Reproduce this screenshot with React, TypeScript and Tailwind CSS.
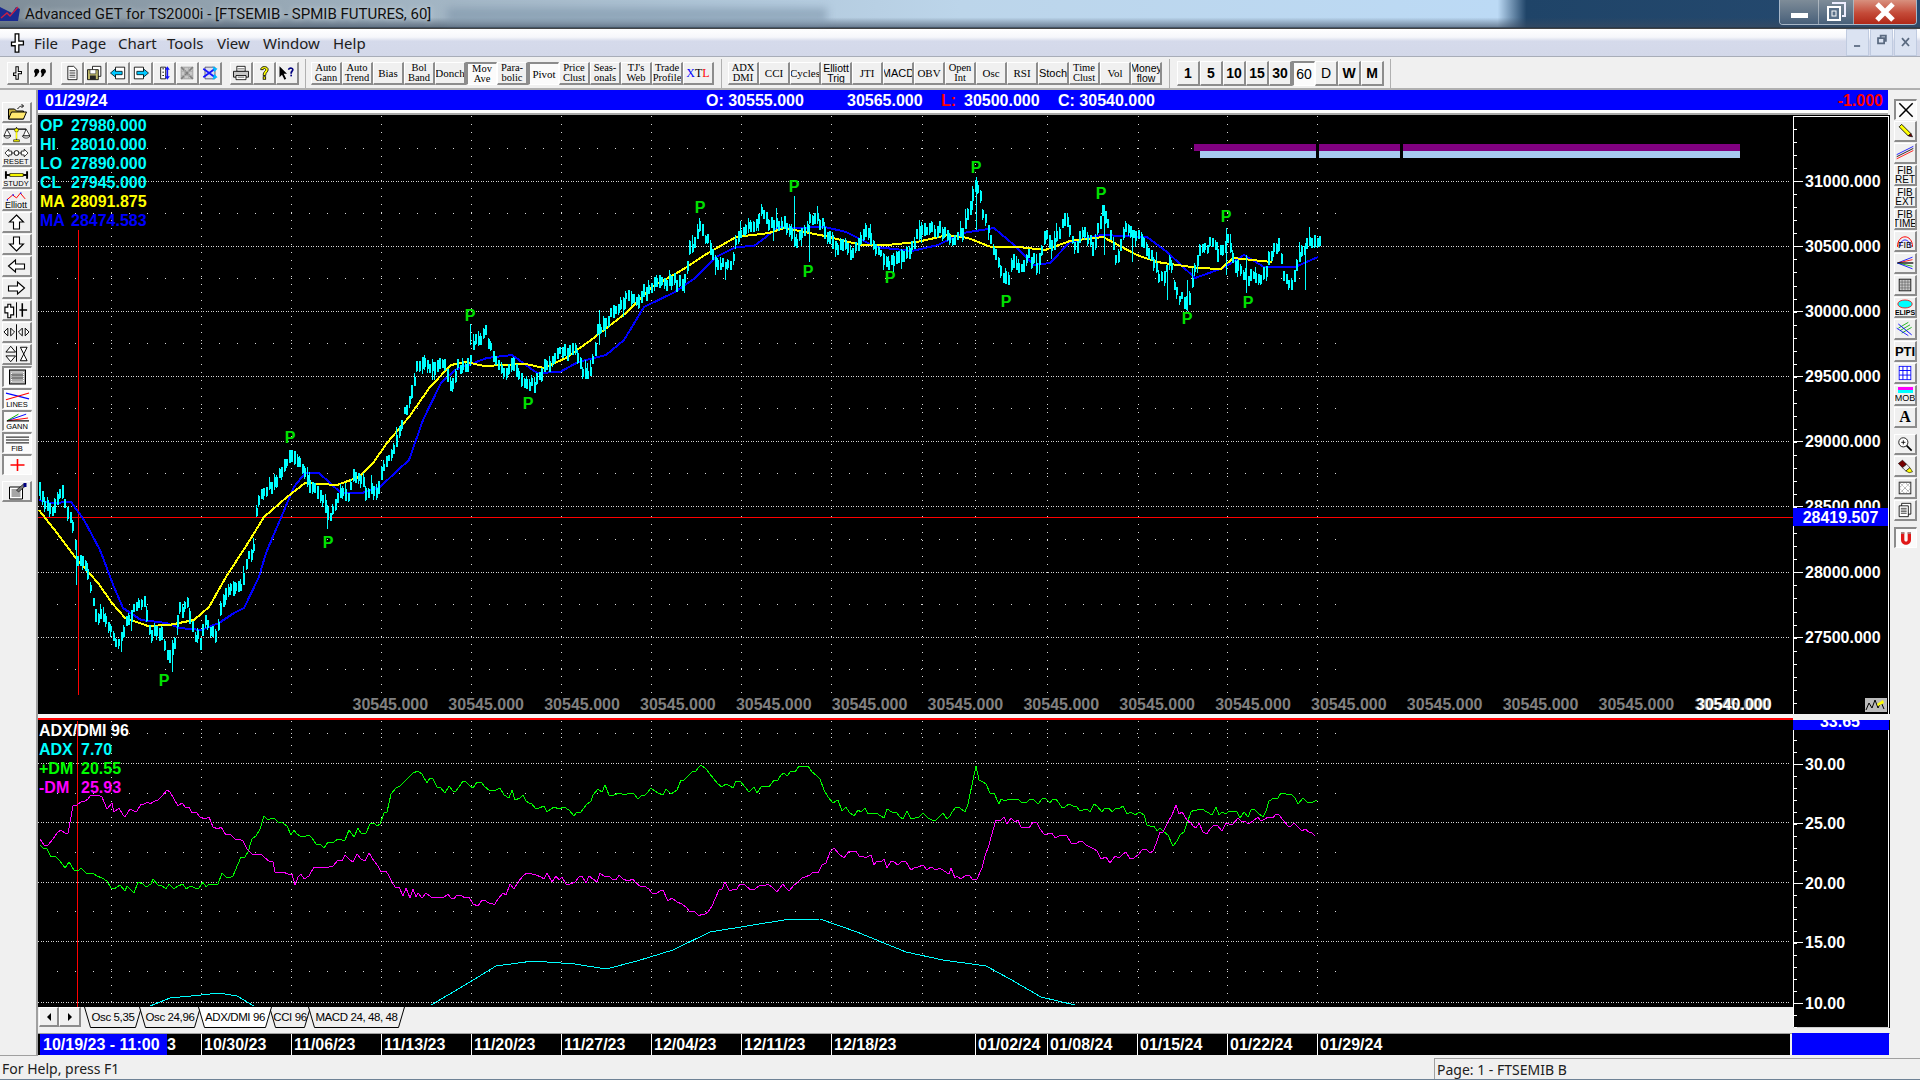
import React from "react";

type P = [number, number];
const ARIAL = "font-['Liberation_Sans',Arial,sans-serif]";
const raised = "flex items-center justify-center overflow-hidden bg-[#f0f0f0] border-t border-l border-t-white border-l-white border-r-2 border-b-2 border-r-[#8c8c8c] border-b-[#8c8c8c]";
const sunken = "flex items-center justify-center overflow-hidden bg-[#fbfbfb] border-t-2 border-l-2 border-t-[#8c8c8c] border-l-[#8c8c8c] border-r border-b border-r-white border-b-white";

const rng = (seed: number) => {
  let s = seed;
  return () => {
    s = (s * 16807) % 2147483647;
    return s / 2147483647;
  };
};
const interp = (pts: P[], x: number) => {
  for (let i = 1; i < pts.length; i++) {
    if (x <= pts[i][0]) {
      const [a, b] = pts[i - 1];
      const [c, d] = pts[i];
      return b + ((d - b) * (x - a)) / Math.max(c - a, 0.001);
    }
  }
  return pts[pts.length - 1][1];
};
const poly = (pts: P[]) => pts.map((p) => p.join(",")).join(" ");

const price: P[] = [[39,493],[44,500],[51,513],[60,490],[66,507],[73,530],[76,563],[82,563],[89,577],[94,613],[105,620],[116,643],[125,627],[134,607],[144,603],[150,633],[162,633],[167,657],[175,640],[178,613],[187,607],[194,633],[200,643],[205,620],[216,640],[219,607],[228,587],[241,587],[248,557],[253,553],[256,513],[259,493],[269,488],[276,480],[284,463],[292,457],[303,467],[307,480],[319,493],[330,520],[337,500],[342,487],[346,500],[351,480],[360,477],[367,493],[378,490],[382,467],[394,450],[401,422],[410,397],[417,363],[430,368],[444,363],[451,387],[457,367],[467,367],[473,343],[485,333],[491,352],[505,373],[512,363],[521,383],[534,387],[541,373],[559,353],[575,350],[581,373],[591,370],[598,330],[614,313],[626,298],[634,303],[649,287],[667,283],[685,282],[688,253],[700,228],[711,250],[718,263],[731,263],[739,230],[751,230],[761,213],[769,225],[784,225],[794,240],[805,230],[815,213],[825,233],[835,243],[851,253],[866,233],[874,250],[892,263],[907,253],[922,227],[938,230],[953,243],[963,230],[976,183],[983,213],[994,253],[1006,282],[1012,260],[1022,273],[1027,253],[1037,267],[1045,230],[1052,250],[1065,217],[1075,247],[1085,230],[1093,250],[1102,210],[1111,237],[1116,263],[1124,230],[1137,237],[1152,257],[1159,280],[1170,263],[1175,290],[1187,307],[1193,273],[1200,250],[1210,243],[1218,253],[1227,240],[1234,263],[1246,277],[1261,280],[1272,253],[1279,247],[1284,277],[1291,285],[1297,263],[1307,243],[1320,240]];
const yellow: P[] = [[39,510],[57,533],[75,557],[98,583],[112,603],[125,618],[148,626],[169,625],[194,620],[209,607],[226,577],[248,543],[264,517],[287,497],[305,483],[337,485],[359,477],[373,463],[387,443],[409,417],[430,387],[451,365],[466,362],[484,366],[526,364],[544,368],[566,358],[591,340],[626,313],[652,287],[682,270],[708,253],[736,237],[769,233],[784,228],[825,236],[861,245],[887,245],[917,242],[948,235],[968,238],[991,247],[1019,247],[1045,250],[1070,241],[1103,237],[1137,255],[1157,262],[1198,268],[1221,269],[1233,258],[1272,262]];
const blue: P[] = [[39,500],[51,503],[71,502],[84,520],[100,550],[114,587],[123,608],[141,620],[166,623],[180,628],[201,630],[219,623],[234,613],[244,608],[259,577],[266,553],[280,520],[294,487],[305,473],[319,473],[341,493],[362,493],[380,487],[398,470],[409,460],[423,420],[441,383],[455,370],[487,358],[512,355],[537,373],[560,372],[578,362],[606,355],[624,340],[644,307],[675,292],[695,278],[716,257],[736,247],[754,246],[779,227],[795,228],[825,227],[846,232],[876,247],[912,251],[938,245],[963,233],[994,228],[1014,245],[1034,265],[1050,263],[1070,242],[1101,235],[1147,237],[1167,252],[1195,278],[1223,268],[1244,255],[1264,267],[1295,267],[1318,257]];
const spikes: [number, number, number][] = [[470,324,345],[809,225,262],[976,177,230],[794,196,240],[1187,280,311],[1132,230,262],[1167,270,300],[1104,205,255],[599,310,345],[1305,243,290],[1226,228,275],[1246,255,293],[76,546,585],[172,640,672],[40,483,500]];
const pMarks: P[] = [[164,680],[290,437],[328,542],[470,315],[528,403],[700,207],[794,186],[808,271],[890,277],[976,167],[1006,301],[1101,193],[1187,318],[1226,216],[1248,302]];

const candles = () => {
  const r = rng(4242);
  let wick = "";
  let body = "";
  for (let x = 39; x <= 1320; x += 2.55) {
    const m = interp(price, x) + (r() - 0.5) * 8;
    const h = r();
    const up = 2 + r() * (h > 0.82 ? 14 : 6);
    const dn = 2 + r() * (h < 0.14 ? 14 : 6);
    const xx = Math.round(x) + 0.5;
    wick += `M${xx} ${(m - up).toFixed(0)}V${(m + dn).toFixed(0)}`;
    body += `M${xx} ${(m - 3 - r() * 4).toFixed(0)}V${(m + 3 + r() * 4).toFixed(0)}`;
  }
  for (const [x, a, b] of spikes) wick += `M${x + 0.5} ${a}V${b}`;
  return { wick, body };
};

const plusDm: P[] = [[33,695],[60,710],[80,720],[100,728],[130,722],[160,725],[190,715],[205,690],[215,670],[240,680],[265,690],[290,680],[310,675],[320,650],[340,632],[360,645],[390,640],[420,650],[440,660],[470,665],[490,645],[520,650],[550,645],[572,625],[590,640],[620,645],[650,630],[665,630],[680,655],[700,665],[730,665],[760,670],[790,660],[797,630],[815,655],[845,655],[880,660],[905,660],[930,665],[960,690],[975,660],[1000,665],[1030,665],[1045,650],[1065,655],[1077,652]];
const minusDm: P[] = [[33,690],[55,680],[62,655],[78,652],[100,665],[120,660],[135,647],[160,665],[185,680],[205,695],[240,720],[270,705],[300,700],[330,730],[370,735],[400,740],[430,715],[470,720],[510,715],[550,735],[575,750],[590,725],[620,725],[645,725],[665,715],[680,695],[720,705],[760,710],[800,718],[812,670],[845,675],[880,690],[905,705],[940,695],[960,660],[985,680],[1020,670],[1045,665],[1060,680],[1077,680]];
const adx: P[] = [[150,1007],[170,999],[201,996],[219,994],[237,997],[254,1007]];
const adx2: P[] = [[431,1006],[465,986],[496,967],[533,962],[575,965],[606,970],[637,962],[673,951],[710,933],[747,927],[784,921],[820,920],[857,933],[906,953],[943,961],[986,967],[1010,980],[1041,998],[1075,1006]];
const wiggle = (src: P[], seed: number, amp: number): P[] => {
  const r = rng(seed);
  const scaled: P[] = src.map(([x, y]) => [x * 1.2245, y * 1.2245]);
  const out: P[] = [];
  for (let x = scaled[0][0]; x <= scaled[scaled.length - 1][0]; x += 2.6 + r() * 2.5) {
    out.push([Math.round(x), Math.round(interp(scaled, x) + (r() - 0.5) * amp)]);
  }
  return out;
};

const vGrid = [111, 201, 291, 381, 471, 561, 651, 741, 831, 922, 975, 1047, 1138, 1227, 1317];
const sparseX: number[] = [];
for (let x = 39; x <= 1317; x += 18) sparseX.push(x + 18);

const topRows = [181, 246, 311, 376, 441, 506, 572, 637];
const topLabels = ["31000.000", "30500.000", "30000.000", "29500.000", "29000.000", "28500.000", "28000.000", "27500.000"];
const botRows = [764, 823, 883, 942, 1003];
const botLabels = ["30.00", "25.00", "20.00", "15.00", "10.00"];

const Svg = ({ children, vb = "0 0 24 18" }: { children: React.ReactNode; vb?: string }) => (
  <svg viewBox={vb} className="w-full h-full block">{children}</svg>
);

const Hand = () => (
  <path d="M10 1h3v6h4v3h-4v7h-3v-5H7V9h3z" fill="#fff" stroke="#000" strokeWidth="1.3" />
);
const Arrow = ({ d }: { d: string }) => <Svg><path d={d} fill="#fff" stroke="#000" strokeWidth="1.1" /></Svg>;
const Lbl = ({ children, cn = "text-[7.5px] leading-[7px]" }: { children: React.ReactNode; cn?: string }) => (
  <span className={`${ARIAL} text-black text-center block whitespace-nowrap ${cn}`}>{children}</span>
);
const Stack = ({ h, vb, label, children, cn }: { h?: string; vb: string; label: string; children: React.ReactNode; cn?: string }) => (
  <div className="flex flex-col items-center w-full">
    <div className={`w-[25px] ${h ?? "h-[10px]"}`}><Svg vb={vb}>{children}</Svg></div>
    <Lbl cn={cn}>{label}</Lbl>
  </div>
);
const Two = ({ a, b }: { a: string; b: string }) => (
  <div>
    <Lbl cn="text-[10px] leading-[9px]">{a}</Lbl>
    <Lbl cn="text-[10px] leading-[9px]">{b}</Lbl>
  </div>
);

const icons: Record<string, React.ReactNode> = {
  hand: <Svg><Hand /></Svg>,
  quotes: <Svg><g fill="#000"><circle cx="8" cy="7" r="3" /><circle cx="16" cy="7" r="3" /><path d="M9 8c1 3-1 5-4 6 1-2 1-3 1-5zM17 8c1 3-1 5-4 6 1-2 1-3 1-5z" /></g></Svg>,
  doc: <Svg><path d="M7 1h7l4 4v12H7z" fill="#fff" stroke="#000" /><path d="M9 6h7M9 8h7M9 10h7M9 12h7M9 14h7" stroke="#000" strokeWidth=".7" /></Svg>,
  save: <Svg><path d="M9 1h10v12H9z" fill="#fff" stroke="#000" /><path d="M3 5h13v12H3z" fill="#bdb76b" stroke="#000" /><path d="M6 5h7v5H6z" fill="#fff" stroke="#000" strokeWidth=".6" /><path d="M6 12h7v5H6z" fill="#222" /></Svg>,
  prev: <Svg><path d="M9 2h11v14H9z" fill="#fff" stroke="#000" /><path d="M3 9l6-5v3h8v4H9v3z" fill="#00c8ff" stroke="#000" strokeWidth=".9" /></Svg>,
  next: <Svg><path d="M4 2h11v14H4z" fill="#fff" stroke="#000" /><path d="M21 9l-6-5v3H7v4h8v3z" fill="#00c8ff" stroke="#000" strokeWidth=".9" /></Svg>,
  vert: <Svg><path d="M8 2h6v14H8z" fill="#fff" stroke="#000" /><path d="M16 1l3 4h-2v8h2l-3 4-3-4h2V5h-2z" fill="#1414ff" /><path d="M10 4h2M10 8h2M10 12h2" stroke="#000" /></Svg>,
  gridx: <Svg><path d="M5 2h14v14H5z" fill="#c8c8c8" stroke="#999" /><path d="M5 2l14 14M19 2L5 16" stroke="#808080" strokeWidth="2" /><path d="M9 2v14M14 2v14M5 7h14M5 12h14" stroke="#aaa" /></Svg>,
  shuffle: <Svg><path d="M6 2h12v14H6z" fill="#dde" stroke="#446" /><path d="M4 4l14 10M4 14L18 4" stroke="#1414ff" strokeWidth="2.2" /><path d="M15 1l6 3-4 4zM15 17l6-3-4-4z" fill="#00b8ff" /></Svg>,
  print: <Svg><path d="M7 1h10v6H7z" fill="#fff" stroke="#000" /><path d="M3 7h18v7H3z" fill="#c8c8c8" stroke="#000" /><path d="M6 12h12v5H6z" fill="#fff" stroke="#000" /><path d="M8 4h8M8 14h8" stroke="#000" strokeWidth=".7" /></Svg>,
  help: <Svg><path d="M8 5c0-5 9-5 9 0 0 3-3 3-3 7h-3c0-5 3-5 3-7 0-2-3-2-3 0z" fill="#ffff00" stroke="#000" /><rect x="11" y="13.5" width="3" height="3" fill="#ffff00" stroke="#000" /></Svg>,
  helpArrow: <Svg><path d="M3 1v13l3-3 3 6 2-1-3-6h4z" fill="#000" /><path d="M13 5c0-4 7-4 7 0 0 2-2 2-2 5h-2c0-4 2-4 2-5 0-1-3-1-3 0z" fill="#000080" /><rect x="16" y="11" width="2" height="2" fill="#000080" /></Svg>,
  folder: <Svg><path d="M4 6h6l2 2h7v8H4z" fill="#c8b040" stroke="#000" /><path d="M4 16l3-7h15l-3 7z" fill="#ffe870" stroke="#000" /><path d="M13 6c2-3 4-3 6-3m0 0l-2-2m2 2l-2 2" fill="none" stroke="#000" strokeWidth=".9" /></Svg>,
  scales: <Svg vb="0 0 28 18"><path d="M14 2v13M4 4h20" stroke="#000" strokeWidth="1.2" /><path d="M4 4L1 11h7zM24 4l-3 7h7z" fill="#fff" stroke="#000" strokeWidth=".8" /><path d="M1 11c1 3 6 3 7 0zM20 11c1 3 7 3 8 0z" fill="#fff" stroke="#000" strokeWidth=".8" /><path d="M11 15h6v2h-6z" fill="#ff0" stroke="#000" strokeWidth=".6" /><circle cx="14" cy="5" r="2" fill="#ff0" stroke="#000" strokeWidth=".5" /><path d="M14 7v7" stroke="#ff0" strokeWidth="1.5" /></Svg>,
  reset: <Stack vb="0 0 26 10" label="RESET"><path d="M1 5l4-4v2h3v4H5v2zM25 5l-4-4v2h-3v4h3v2z" fill="#fff" stroke="#000" strokeWidth=".8" /><circle cx="13" cy="5" r="2.500" fill="#fff" stroke="#000" /><path d="M8 5h2M16 5h2" stroke="#000" /></Stack>,
  study: <Stack vb="0 0 26 10" label="STUDY"><path d="M1 5h24" stroke="#000" strokeWidth="2" /><path d="M6 3.500h14v3H6z" fill="#ff0" stroke="#000" strokeWidth=".7" /><path d="M2 1v8M24 1v8" stroke="#000" strokeWidth="2" /></Stack>,
  elliott: <Stack h="h-[10px]" vb="0 0 26 10" label="Elliott" cn="text-[9px] leading-[8px]"><path d="M3 9l6-5 4 3 4-5 5 6" fill="none" stroke="#f00" strokeWidth="1" /><path d="M3 9h1M9 4h1M17 2h1" stroke="#00f" strokeWidth="2" /></Stack>,
  up: <Arrow d="M12 2l7 7h-4v7H9V9H5z" />,
  down: <Arrow d="M12 16l7-7h-4V2H9v7H5z" />,
  left: <Arrow d="M4 9l7-6v4h9v5h-9v3z" />,
  right: <Arrow d="M20 9l-7-6v4H4v5h9v3z" />,
  bars: <Svg vb="0 0 28 18"><path d="M5 3h3v3h3v8H8v3H5v-5H2V6h3z" fill="#fff" stroke="#000" strokeWidth="1.2" /><path d="M14 1v16" stroke="#000" /><path d="M20 2v7h-3M20 9h5M20 9v7" fill="none" stroke="#000" strokeWidth="1.6" /></Svg>,
  hzoom: <Svg vb="0 0 28 18"><path d="M1 9l4-4v8zM12 9L8 5v8zM16 9l4-4v8zM27 9l-4-4v8z" fill="#fff" stroke="#000" /><path d="M14 1v16" stroke="#000" /></Svg>,
  vzoom: <Svg vb="0 0 28 18"><path d="M8 1l5 6H3zM8 17l5-6H3z" fill="#fff" stroke="#000" /><path d="M14 1v16" stroke="#000" /><path d="M18 2h7l-3.500 7 3.500 7h-7l3.500-7z" fill="#fff" stroke="#000" /></Svg>,
  dotgrid: <Svg vb="0 0 24 18"><rect x="4" y="2" width="16" height="14" fill="#aaa" stroke="#000" /><path d="M6 4h12v10H6z" fill="none" stroke="#fff" strokeDasharray="1 1" /><path d="M6 7h12M6 10h12" stroke="#000" strokeDasharray="1 1" /></Svg>,
  lines: <Stack vb="0 0 26 10" label="LINES"><path d="M1 2l24 6" stroke="#00f" strokeWidth="1.1" /><path d="M1 9l24-7" stroke="#f00" strokeWidth="1.1" /></Stack>,
  gann: <Stack vb="0 0 26 10" label="GANN"><path d="M2 8L22 1" stroke="#00f" /><path d="M2 8l22-3" stroke="#f00" /><path d="M2 8L14 1" stroke="#0a0" /><path d="M2 8h23" stroke="#000" strokeWidth="1.2" /></Stack>,
  fib: <Stack vb="0 0 26 10" label="FIB"><path d="M1 2h24M1 5h24M1 8h24" stroke="#000" /></Stack>,
  plus: <Svg><path d="M12 3v12M5 9h14" stroke="#f00" strokeWidth="1.6" /></Svg>,
  form: <Svg><path d="M5 5h13v12H5z" fill="#fff" stroke="#000" /><path d="M7 8h9M7 10h9M7 12h9M7 14h9" stroke="#000" strokeWidth=".7" /><path d="M12 8l7-6 2 2-7 6z" fill="#777" stroke="#000" strokeWidth=".6" /><rect x="19" y="1" width="3" height="4" fill="#000080" /></Svg>,
  cross: <Svg><path d="M4 1l16 16M20 1L4 17" stroke="#000" strokeWidth="1.8" /></Svg>,
  pencil: <Svg><path d="M5 4l3-3 11 11-3 3z" fill="#ffff00" stroke="#000" /><path d="M16 15l3-3 2 4z" fill="#700" stroke="#000" strokeWidth=".8" /></Svg>,
  parallel: <Svg><path d="M2 11L22 1" stroke="#00f" /><path d="M2 13.500L22 3.500" stroke="#000" /><path d="M2 16L22 6" stroke="#f00" /></Svg>,
  firet: <Two a="FIB" b="RET" />,
  fiext: <Two a="FIB" b="EXT" />,
  fitime: <Two a="FIB" b="TIME" />,
  fiarc: <div className="relative w-full h-full"><div className="w-full h-full"><Svg><path d="M3 16C3 0 21 0 21 16" fill="none" stroke="#f00" strokeWidth="1.2" /><path d="M6 16C6 5 18 5 18 16" fill="none" stroke="#00f" /></Svg></div><span className={`${ARIAL} absolute inset-x-0 bottom-0 text-[9px] leading-[10px] text-center text-black`}>FIB</span></div>,
  fan: <Svg><path d="M3 9L21 2" stroke="#00f" /><path d="M3 9l18-4" stroke="#f00" /><path d="M3 9h19" stroke="#000" strokeWidth="1.5" /><path d="M3 9l18 4" stroke="#0a0" /><path d="M3 9l18 7" stroke="#00f" /></Svg>,
  grid: <Svg><rect x="5" y="2" width="14" height="14" fill="#c8c8c8" stroke="#000" /><path d="M8.500 2v14M12 2v14M15.500 2v14M5 5.500h14M5 9h14M5 12.500h14" stroke="#555" strokeWidth=".7" /></Svg>,
  elips: <div className="flex flex-col items-center w-full"><div className="w-[16px] h-[10px]"><Svg vb="0 0 20 11"><ellipse cx="10" cy="5.500" rx="9" ry="5" fill="#00ffff" stroke="#f00" /></Svg></div><Lbl cn="font-bold text-[7px] leading-[7px]">ELIPS</Lbl></div>,
  diag: <Svg><path d="M4 8L16 1M6 11L18 4M8 14L20 7" stroke="#0a0" /><path d="M4 3l16 13" stroke="#00f" strokeWidth="1.1" /><path d="M2 8l14 9" stroke="#00f" /></Svg>,
  pti: <span className={`${ARIAL} font-bold text-[13px] text-black leading-none`}>PTI</span>,
  bgrid: <Svg><rect x="5" y="1" width="14" height="16" fill="#fff" stroke="#00f" /><path d="M9.500 1v16M14.500 1v16M5 6h14M5 11.500h14" stroke="#00f" strokeWidth="1.1" /></Svg>,
  mob: <div className="flex flex-col items-center w-full"><div className="w-[15px] h-[3px] bg-[#ff00ff]" /><div className="w-[15px] h-[3px] bg-[#00ffff] mb-px" /><Lbl cn="text-[9px] leading-[9px]">MOB</Lbl></div>,
  a: <span className="font-['Liberation_Serif',serif] font-bold text-[16px] leading-none text-black">A</span>,
  zoom: <Svg><circle cx="10" cy="7" r="5.500" fill="#fff" stroke="#000" /><path d="M7.500 7h5M10 4.500v5" stroke="#000" /><path d="M14 11l6 6" stroke="#000" strokeWidth="2" /></Svg>,
  eraser: <Svg><path d="M4 6l5-4 5 5-5 4z" fill="#700" stroke="#000" strokeWidth=".7" /><path d="M9 11l5-4 4 4-5 4z" fill="#eee" stroke="#000" strokeWidth=".7" /><path d="M13 15l5-4 3 5-4 1z" fill="#ff0" stroke="#000" strokeWidth=".7" /></Svg>,
  hatch: <Svg><rect x="5" y="2" width="14" height="14" fill="#fff" stroke="#000" /><path d="M5 2l14 14M19 2L5 16M12 2l7 7-7 7-7-7z" stroke="#666" strokeDasharray="1 1" fill="none" /></Svg>,
  pages: <Svg><path d="M8 1h11v13H8z" fill="#fff" stroke="#000" /><path d="M5 4h11v13H5z" fill="#fff" stroke="#000" /><path d="M7 7h7M7 9h7M7 11h7M7 13h7" stroke="#000" strokeWidth=".8" /></Svg>,
  magnet: <Svg><path d="M6 2h4v9c0 3 4 3 4 0V2h4v9c0 8-12 8-12 0z" fill="#e01818" /><path d="M6 2h4v2H6zM14 2h4v2h-4z" fill="#999" /></Svg>,
  smallChart: <Svg vb="0 0 22 14"><rect width="22" height="14" fill="#bbb" /><path d="M1 12l3-7 3 5 3-8 3 8 3-6 3 7" fill="none" stroke="#000" /><path d="M12 6l6-4 1 3-6 3z" fill="#ff0" /></Svg>,
};

const leftTools = ["folder", "scales", "reset", "study", "elliott", "up", "down", "left", "right", "bars", "hzoom", "vzoom"];
const leftPressed = ["dotgrid", "lines", "gann", "fib", "plus"];
const rightTop = ["pencil", "parallel", "firet", "fiext", "fitime", "fiarc", "fan", "grid", "elips", "diag", "pti", "bgrid", "mob", "a"];
const rightMid = ["zoom", "eraser", "hatch", "pages"];

const T = ({ name, pressed, cn }: { name: string; pressed?: boolean; cn: string }) => (
  <div className={`${pressed ? sunken : raised} ${cn}`}>{icons[name]}</div>
);

const serif = "font-['Liberation_Serif',serif]";
const sans = ARIAL;
const g2: [string, string?, string?, boolean?][] = [
  ["Auto", "Gann", serif], ["Auto", "Trend", serif], ["Bias", undefined, serif], ["Bol", "Band", serif], ["Donch", undefined, serif],
  ["Mov", "Ave", serif, true], ["Para-", "bolic", serif], ["Pivot", undefined, serif, true], ["Price", "Clust", serif], ["Seas-", "onals", serif],
  ["TJ's", "Web", serif], ["Trade", "Profile", serif],
];
const g3: [string, string?, string?][] = [
  ["ADX", "DMI", serif], ["CCI", undefined, serif], ["Cycles", undefined, serif], ["Elliott", "Trig", sans], ["JTI", undefined, serif], ["MACD", undefined, sans], ["OBV", undefined, serif],
  ["Open", "Int", serif], ["Osc", undefined, serif], ["RSI", undefined, serif], ["Stoch", undefined, sans], ["Time", "Clust", serif], ["Vol", undefined, serif], ["Money", "flow", sans],
];
const TxtBtn = ({ a, b, f, p }: { a: string; b?: string; f?: string; p?: boolean }) => (
  <div className={`${p ? sunken : raised} w-[31px] h-[23px] flex-col text-black ${f} ${b ? "text-[10.5px] leading-[10px]" : "text-[11px] leading-[12px]"} text-center`}>
    <span className="block whitespace-nowrap">{a}</span>
    {b && <span className="block whitespace-nowrap">{b}</span>}
  </div>
);

const Tab = ({ label, w, active }: { label: string; w: number; active?: boolean }) => (
  <div className={`relative h-[21px] flex items-center justify-center -ml-[3px] ${active ? "z-10" : ""}`} style={{ width: w }}>
    <svg className="absolute inset-0 w-full h-full" viewBox={`0 0 ${w} 21`} preserveAspectRatio="none">
      <path d={`M0.500 0L6.500 20.500H${w - 6.5}L${w - 0.5} 0`} fill={active ? "#fff" : "#f0f0f0"} stroke="#000" />
    </svg>
    <span className={`${ARIAL} relative text-[11.5px] tracking-[-0.4px] text-black whitespace-nowrap`}>{label}</span>
  </div>
);

const TopChart = () => {
  const { wick, body } = candles();
  const ticks: number[] = [];
  for (let y = 181 - 13 * 5; y < 714; y += 13.04) ticks.push(Math.round(y) + 0.5);
  return (
    <svg viewBox="38 115 1852 599" className="block w-[1852px] h-[599px]" style={{ fontFamily: "'Liberation Sans', Arial, sans-serif" }}>
      <rect x="38" y="115" width="1852" height="599" fill="#000" />
      <g shapeRendering="crispEdges">
        {topRows.map((y) => (
          <path key={y} d={`M38 ${y + 0.5}H1791`} stroke="#d8d8d8" strokeDasharray="1 1.5" />
        ))}
        {vGrid.map((x) => (
          <path key={x} d={`M${x + 0.5} 116V700`} stroke="#d8d8d8" strokeDasharray="1 7" />
        ))}
        {[148, 213, 278, 343, 408, 473, 539, 604, 669].map((y) =>
          sparseX.map((x) => <rect key={`${x}-${y}`} x={x} y={y} width="1" height="1" fill="#d8d8d8" />)
        )}
        <path d="M78.500 230V695" stroke="#ff0000" />
        <path d="M38 517.500H1793" stroke="#ff0000" />
        <path d="M1194 144h546v7h-546z" fill="#800080" />
        <path d="M1200 151h540v7h-540z" fill="#a6caf0" />
        <path d="M1316 144h3v14h-3zM1400 144h3v14h-3z" fill="#000" />
        <polyline points={poly(blue)} fill="none" stroke="#0000ff" strokeWidth="2" />
        <polyline points={poly(yellow)} fill="none" stroke="#ffff00" strokeWidth="2" />
        <path d={wick} stroke="#00ffff" strokeWidth="1" fill="none" />
        <path d={body} stroke="#00ffff" strokeWidth="2" fill="none" />
      </g>
      {pMarks.map(([x, y]) => (
        <text key={`${x}`} x={x} y={y + 6} textAnchor="middle" fontSize="16" fontWeight="700" fill="#00e000">P</text>
      ))}
      <g shapeRendering="crispEdges">
        <path d="M1793.500 116V714M1793 116.500H1888M1888.500 116V714" stroke="#fff" />
        {ticks.map((y) => <path key={y} d={`M1794 ${y}H1797`} stroke="#fff" />)}
        {topRows.map((y) => <path key={y} d={`M1794 ${y + 0.5}H1803`} stroke="#fff" />)}
      </g>
      {topRows.map((y, i) => (
        <text key={y} x="1805" y={y + 6} fontSize="16" fontWeight="700" fill="#fff">{topLabels[i]}</text>
      ))}
      {Array.from({ length: 15 }).map((_, i) => (
        <text key={i} x={352.5 + i * 95.85} y="710" fontSize="16" fontWeight="700" fill="#808080">30545.000</text>
      ))}
      <text x="1696" y="710" fontSize="16" fontWeight="700" fill="#fff">30540.000</text>
      <rect x="1793" y="508" width="95" height="18" fill="#0000ff" />
      <text x="1840.5" y="523" textAnchor="middle" fontSize="16" fontWeight="700" fill="#fff">28419.507</text>
    </svg>
  );
};

const BottomChart = () => (
  <svg viewBox="38 720 1755 288" className="block w-[1755px] h-[288px]">
    <rect x="38" y="720" width="1755" height="288" fill="#000" />
    <g shapeRendering="crispEdges">
      {botRows.map((y) => <path key={y} d={`M38 ${y + 0.5}H1790`} stroke="#d8d8d8" strokeDasharray="1 1.5" />)}
      {vGrid.map((x) => <path key={x} d={`M${x + 0.5} 722V1005`} stroke="#d8d8d8" strokeDasharray="1 7" />)}
      {[734, 794, 853, 912, 972].map((y) =>
        sparseX.map((x) => <rect key={`${x}-${y}`} x={x} y={y} width="1" height="1" fill="#d8d8d8" />)
      )}
      <path d="M77.500 722V1008" stroke="#ff0000" />
      <polyline points={poly(adx)} fill="none" stroke="#00ffff" />
      <polyline points={poly(adx2)} fill="none" stroke="#00ffff" />
      <polyline points={poly(wiggle(plusDm, 77, 10))} fill="none" stroke="#00ff00" />
      <polyline points={poly(wiggle(minusDm, 991, 10))} fill="none" stroke="#ff00ff" />
    </g>
  </svg>
);

const BottomScale = () => {
  const t: number[] = [];
  for (let y = 740; y < 1028; y += 11.95) t.push(Math.round(y) + 0.5);
  return (
    <svg viewBox="1793 720 97 308" className="block w-[97px] h-[308px]" style={{ fontFamily: "'Liberation Sans', Arial, sans-serif" }}>
      <rect x="1793" y="720" width="97" height="308" fill="#000" />
      <g shapeRendering="crispEdges">
        <path d="M1793.500 720V1028M1888.500 720V1028" stroke="#fff" />
        <path d="M1793 1027.500H1889" stroke="#ccc" />
        {t.map((y) => <path key={y} d={`M1794 ${y}H1797`} stroke="#fff" />)}
        {botRows.map((y) => <path key={y} d={`M1794 ${y + 0.5}H1803`} stroke="#fff" />)}
      </g>
      {botRows.map((y, i) => (
        <text key={y} x="1805" y={y + 6} fontSize="16" fontWeight="700" fill="#fff">{botLabels[i]}</text>
      ))}
      <rect x="1793" y="720" width="96" height="10" fill="#0000ff" />
      <svg x="1793" y="720" width="96" height="9" viewBox="1793 720 96 9">
        <text x="1840" y="727" textAnchor="middle" fontSize="16" fontWeight="700" fill="#fff">33.65</text>
      </svg>
    </svg>
  );
};

const dates: [string, string][] = [
  ["10/30/23", "w-[90px]"], ["11/06/23", "w-[90px]"], ["11/13/23", "w-[90px]"], ["11/20/23", "w-[90px]"], ["11/27/23", "w-[90px]"], ["12/04/23", "w-[90px]"],
  ["12/11/23", "w-[90px]"], ["12/18/23", "w-[144px]"], ["01/02/24", "w-[72px]"], ["01/08/24", "w-[90px]"], ["01/15/24", "w-[90px]"], ["01/22/24", "w-[90px]"], ["01/29/24", "w-[90px]"],
];

const legendTop: [string, string, string][] = [
  ["OP", "27980.000", "text-[#00ffff]"], ["HI", "28010.000", "text-[#00ffff]"], ["LO", "27890.000", "text-[#00ffff]"],
  ["CL", "27945.000", "text-[#00ffff]"], ["MA", "28091.875", "text-[#ffff00]"], ["MA", "28474.583", "text-[#0000ff]"],
];
const legendBot: [string, string, string][] = [
  ["ADX/DMI 96", "", "text-white"], ["ADX", "7.70", "text-[#00ffff]"], ["+DM", "20.55", "text-[#00ff00]"], ["-DM", "25.93", "text-[#ff00ff]"],
];

export default function App() {
  return (
    <div className={`w-[1920px] h-[1080px] overflow-hidden flex flex-col bg-[#f0f0f0] ${ARIAL}`}>
      {/* title bar */}
      <div className="h-[28px] flex items-start shrink-0 bg-[linear-gradient(to_bottom,transparent_62%,rgba(60,75,95,.6)_96%,#22303f_100%),linear-gradient(to_right,#7f8d98_0%,#a0b2c0_20%,#bcd5ea_50%,#bcdaf5_78%,#1f4468_79.5%,#264a70_100%)]">
        <div className="w-[22px] h-[18px] mt-[4px]">
          <svg viewBox="0 0 22 18" className="w-full h-full"><path d="M0 3l12 6 4-6 4 2-2 12H0z" fill="#1a2a90" /><path d="M1 14l6-5 3 3 8-9" fill="none" stroke="#d02040" strokeWidth="1.3" /></svg>
        </div>
        <span className="font-['Roboto',sans-serif] text-[15px] leading-[28px] ml-[3px] text-[#101010] whitespace-nowrap [text-shadow:0_0_6px_rgba(255,255,255,.6)]">Advanced GET for TS2000i - [FTSEMIB - SPMIB FUTURES, 60]</span>
        <div className="ml-[16px] mt-[8px] w-[380px] h-[14px] bg-[#7c93a8]/60 blur-[4px]" />
        <div className="ml-auto mr-[3px] w-[138px] h-[25px] flex rounded-b-[4px] border border-t-0 border-[#c8d4e0]/80 overflow-hidden">
          <div className="w-[39px] flex items-end justify-center pb-[6px] bg-[linear-gradient(to_bottom,#7e8c98,#48607a)] border-r border-white/40"><div className="w-[17px] h-[5px] bg-white" /></div>
          <div className="w-[35px] flex items-center justify-center bg-[linear-gradient(to_bottom,#7e8c98,#48607a)] border-r border-white/40">
            <svg viewBox="0 0 20 20" className="w-[20px] h-[20px]"><path d="M6 1h13v13h-3" fill="none" stroke="#eef" strokeWidth="2" /><rect x="2" y="5" width="12" height="13" fill="#5a7088" stroke="#fff" strokeWidth="2" /><rect x="6" y="9" width="4" height="5" fill="none" stroke="#fff" /></svg>
          </div>
          <div className="flex-1 flex items-center justify-center bg-[linear-gradient(to_bottom,#d8907e,#c44a38_55%,#b02818)]">
            <svg viewBox="0 0 24 20" className="w-[24px] h-[20px]"><path d="M4 2l16 16M20 2L4 18" stroke="#fff" strokeWidth="5" /></svg>
          </div>
        </div>
      </div>

      {/* menu bar */}
      <div className="h-[29px] shrink-0 flex items-center bg-[linear-gradient(to_bottom,#ffffff_0%,#f6f7fb_30%,#d5daeb_45%,#d3d8e9_100%)] border-b border-b-[#a8adb8] border-t border-t-[#444]">
        <div className="w-[22px] h-[24px] ml-[6px]"><svg viewBox="0 0 24 24" className="w-full h-full"><path d="M10 2h4v8h5v4h-5v8h-4v-7H6v-4h4z" fill="#fff" stroke="#000" strokeWidth="1.4" /></svg></div>
        <div className="flex font-['Noto_Sans',sans-serif] text-[15px] text-[#202020] ml-[6px] pt-[1px]">
          <span className="w-[37px]">File</span>
          <span className="w-[47px]">Page</span>
          <span className="w-[49px]">Chart</span>
          <span className="w-[50px]">Tools</span>
          <span className="w-[46px]">View</span>
          <span className="w-[70px]">Window</span>
          <span>Help</span>
        </div>
        <div className="ml-auto mr-[3px] flex gap-px h-[27px]">
          {["M8 16h7", "M8 7h7v6H8zM11 7V4h6v6h-2", "M8 7l8 9M16 7l-8 9"].map((d, i) => (
            <div key={i} className="w-[23px] bg-[#dbe3f2] border border-[#c0cbe0]">
              <svg viewBox="0 0 24 24" className="w-full h-full"><path d={d} fill="none" stroke="#5a6a80" strokeWidth="2" /></svg>
            </div>
          ))}
        </div>
      </div>

      {/* toolbar */}
      <div className="h-[33px] shrink-0 flex items-center pt-[2px] bg-[#f0f0f0] border-b-2 border-b-[#b0b0b0]">
        <div className="flex ml-[7px]">
          <T name="hand" cn="w-[22px] h-[23px]" />
          <T name="quotes" cn="w-[23px] h-[23px]" />
        </div>
        <div className="flex ml-[9px]">
          {["doc", "save", "prev", "next", "vert", "gridx", "shuffle"].map((n) => <T key={n} name={n} cn="w-[23px] h-[23px]" />)}
        </div>
        <div className="flex ml-[8px]">
          {["print", "help", "helpArrow"].map((n) => <T key={n} name={n} cn="w-[23px] h-[23px]" />)}
        </div>
        <div className="w-px h-[30px] bg-[#b0b0b0] ml-[6px]" />
        <div className="flex ml-[5px]">
          {g2.map(([a, b, f, p]) => <TxtBtn key={a} a={a} b={b} f={f} p={p} />)}
          <div className={`${raised} w-[31px] h-[23px] ${serif} text-[12px]`}>
            <span className="text-[#0000ff]">X</span><span className="text-black">T</span><span className="text-[#ff0000]">L</span>
          </div>
        </div>
        <div className="w-px h-[30px] bg-[#b0b0b0] ml-[7px]" />
        <div className="flex ml-[6px]">
          {g3.map(([a, b, f]) => <TxtBtn key={a} a={a} b={b} f={f} />)}
        </div>
        <div className="w-px h-[30px] bg-[#b0b0b0] ml-[7px]" />
        <div className={`flex ml-[7px] ${ARIAL} text-[14px] font-bold text-black`}>
          {["1", "5", "10", "15", "30", "60", "D", "W", "M"].map((n) => (
            <div key={n} className={`${n === "60" ? sunken : raised} w-[23px] h-[25px] ${n === "60" || n === "D" ? "font-normal" : ""}`}>{n}</div>
          ))}
        </div>
        <div className="w-px h-[30px] bg-[#b0b0b0] ml-[6px]" />
      </div>

      {/* main */}
      <div className="flex flex-1 min-h-0">
        <div className="w-[38px] shrink-0 flex flex-col items-center pt-[12px] pr-[3px] gap-px border-r-2 border-r-[#a0a0a0] h-[966px] border-b border-b-[#a0a0a0]">
          {leftTools.map((n) => <T key={n} name={n} cn="w-[30px] h-[21px] shrink-0" />)}
          {leftPressed.map((n) => <T key={n} name={n} pressed cn="w-[30px] h-[21px] shrink-0" />)}
          <T name="form" cn="w-[30px] h-[21px] mt-[5px] shrink-0" />
        </div>

        <div className="w-[1852px] shrink-0 flex flex-col">
          <div className="h-[20px] w-[1850px] bg-[#0000ff] flex items-center text-white font-bold text-[16px] leading-[20px] pt-[1px]">
            <span className="w-[668px] pl-[7px]">01/29/24</span>
            <span className="w-[141px]">O: 30555.000</span>
            <span className="w-[94px]">30565.000</span>
            <span className="w-[23px] text-[#ff0000]">L:</span>
            <span className="w-[94px]">30500.000</span>
            <span className="flex-1">C: 30540.000</span>
            <span className="text-[#ff0000] pr-[5px]">-1.000</span>
          </div>
          <div className="h-[5px] border-b-2 border-b-[#a8a8a8] bg-white w-[1850px]" />
          <div className="relative h-[599px]">
            <TopChart />
            <div className="absolute left-[2px] top-[1px] text-[16px] font-bold leading-[19px]">
              {legendTop.map(([a, b, c], i) => (
                <div key={i} className={`flex ${c}`}><span className="w-[31px]">{a}</span><span>{b}</span></div>
              ))}
            </div>
            <div className="absolute right-[3px] bottom-[2px] w-[22px] h-[14px]">{icons.smallChart}</div>
          </div>
          <div className="h-[6px] bg-[#f4f4f4] border-b-2 border-b-[#ff0000] w-[1755px]" />
          <div className="flex h-[308px]">
            <div className="w-[1755px] flex flex-col">
              <div className="relative h-[287px] overflow-hidden">
                <div className="-mt-[1px]"><BottomChart /></div>
                <div className="absolute left-[1px] top-[1px] text-[16px] font-bold leading-[19px]">
                  {legendBot.map(([a, b, c], i) => (
                    <div key={i} className={`flex ${c}`}><span className={b ? "w-[42px]" : ""}>{a}</span><span>{b}</span></div>
                  ))}
                </div>
              </div>
              <div className="flex h-[21px] bg-[#f0f0f0] items-start pl-[1px]">
                <div className={`${raised} w-[20px] h-[20px]`}><svg viewBox="0 0 10 10" className="w-[10px] h-[10px]"><path d="M7 1v8L3 5z" fill="#000" /></svg></div>
                <div className={`${raised} w-[22px] h-[20px] mr-[6px]`}><svg viewBox="0 0 10 10" className="w-[10px] h-[10px]"><path d="M3 1v8l4-4z" fill="#000" /></svg></div>
                <Tab label="Osc 5,35" w={58} />
                <Tab label="Osc 24,96" w={62} />
                <Tab label="ADX/DMI 96" w={74} active />
                <Tab label="CCI 96" w={42} />
                <Tab label="MACD 24, 48, 48" w={97} />
              </div>
            </div>
            <BottomScale />
          </div>
          <div className="h-[6px] border-b border-b-[#a0a0a0]" />
          <div className="flex h-[21px] items-stretch">
            <div className="w-[1752px] bg-black flex text-white font-bold text-[16px] leading-[21px]">
              <div className="w-[163px] flex whitespace-nowrap">
                <span className="bg-[#0000ff] pl-[3px] pr-[2px] w-[127px] ml-[2px]">10/19/23 - 11:00</span>
                <span>3</span>
              </div>
              {dates.map(([d, w]) => (
                <span key={d} className={`${w} pl-[2px] border-l border-l-white`}>{d}</span>
              ))}
            </div>
            <div className="w-[97px] ml-[2px] bg-[#0000ff] -mt-[1px]" />
          </div>
        </div>

        <div className="w-[30px] shrink-0 flex flex-col items-end pt-[9px] pr-[3px] gap-px bg-[#f0f0f0]">
          <T name="cross" pressed cn="w-[23px] h-[21px] shrink-0" />
          {rightTop.map((n) => <T key={n} name={n} cn="w-[23px] h-[21px] shrink-0" />)}
          <div className="h-[4px] shrink-0" />
          {rightMid.map((n) => <T key={n} name={n} cn="w-[23px] h-[21px] shrink-0" />)}
          <div className="h-[4px] shrink-0" />
          <T name="magnet" pressed cn="w-[23px] h-[21px] shrink-0" />
        </div>
      </div>

      {/* status */}
      <div className="h-[22px] shrink-0 flex font-['Noto_Sans',sans-serif] text-[14px] text-[#202020] leading-[22px] border-b border-b-[#6e8296]">
        <span className="w-[1434px] pl-[2px]">For Help, press F1</span>
        <span className="flex-1 pl-[2px] border-l border-t border-[#a0a0a0]">Page: 1 - FTSEMIB B</span>
      </div>
    </div>
  );
}
